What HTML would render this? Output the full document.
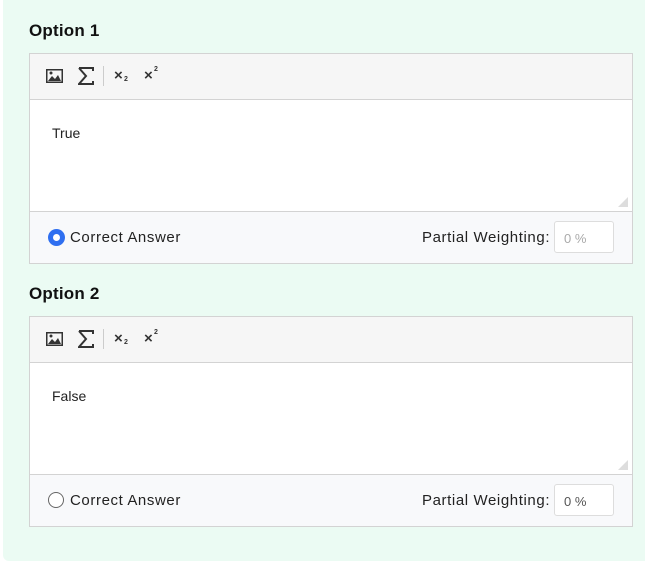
<!DOCTYPE html>
<html><head><style>
body{margin:0;width:645px;height:562px;background:#fff;font-family:"Liberation Sans",sans-serif;position:relative;overflow:hidden}
.panel{position:absolute;left:3px;top:-6px;width:648px;height:567px;background:#ebfbf3;border-radius:6px}
h3{position:absolute;left:29px;margin:0;font-size:17px;font-weight:bold;color:#111;letter-spacing:0.2px}
.box{position:absolute;left:29px;width:602px;height:209px;border:1px solid #d3d3d3;background:#fff}
.tb{height:45px;background:#f6f6f6;border-bottom:1px solid #d3d3d3;position:relative}
.ta{height:111px;position:relative;border-bottom:1px solid #d3d3d3}
.ta span{position:absolute;left:22px;top:25px;font-size:14px;color:#222}
.grip{position:absolute;right:4px;bottom:4px;width:0;height:0;border-left:10px solid transparent;border-bottom:10px solid #ddd}
.ft{height:51px;background:#f8f9fb;position:relative;font-size:15px;color:#222;letter-spacing:0.6px}
.radio{position:absolute;left:18px;top:17px;width:14px;height:14px;border-radius:50%;border:1.5px solid #666;background:#fff}
.radio.on{border:none;width:17px;height:17px;background:#2f6ff0;top:17px}
.radio.on:after{content:"";position:absolute;left:5px;top:5px;width:7px;height:7px;border-radius:50%;background:#fff}
.ca{position:absolute;left:40px;top:17px}
.pw{position:absolute;left:392px;top:17px}
.inp{position:absolute;left:524px;top:9px;width:60px;height:32px;border:1px solid #ddd;border-radius:3px;background:#fff;font-size:13px;color:#999;box-sizing:border-box;padding:9px 0 0 9px;letter-spacing:0}
.x{position:absolute;top:13px;font-size:15px;color:#333;font-weight:bold}
.x small{font-size:7px;position:absolute;left:10px}
</style></head><body>
<div class="panel"></div>

<h3 style="top:21px">Option 1</h3>
<div class="box" style="top:53px">
 <div class="tb">
  <svg style="position:absolute;left:16px;top:15px" width="17" height="14" viewBox="0 0 17 14"><rect x="0.75" y="0.75" width="15.5" height="12.5" fill="none" stroke="#333" stroke-width="1.5"/><path d="M2 12 L6 7 L9 10 L12 6 L15 12 Z" fill="#333"/><circle cx="5" cy="4" r="1.5" fill="#333"/></svg>
  <svg style="position:absolute;left:48px;top:13px" width="16" height="18" viewBox="0 0 16 18"><path d="M1 1 H15 V4 M1 1 L8 9 L1 17 H15 V14" fill="none" stroke="#333" stroke-width="2"/></svg>
  <div style="position:absolute;left:73px;top:12px;width:1px;height:20px;background:#ccc"></div>
  <span class="x" style="left:84px">×<small style="top:9px">2</small></span>
  <span class="x" style="left:114px">×<small style="top:-1px">2</small></span>
 </div>
 <div class="ta"><span>True</span><div class="grip"></div></div>
 <div class="ft"><div class="radio on"></div><span class="ca">Correct Answer</span><span class="pw">Partial Weighting:</span><div class="inp" style="color:#aaa">0 %</div></div>
</div>

<h3 style="top:284px">Option 2</h3>
<div class="box" style="top:316px">
 <div class="tb">
  <svg style="position:absolute;left:16px;top:15px" width="17" height="14" viewBox="0 0 17 14"><rect x="0.75" y="0.75" width="15.5" height="12.5" fill="none" stroke="#333" stroke-width="1.5"/><path d="M2 12 L6 7 L9 10 L12 6 L15 12 Z" fill="#333"/><circle cx="5" cy="4" r="1.5" fill="#333"/></svg>
  <svg style="position:absolute;left:48px;top:13px" width="16" height="18" viewBox="0 0 16 18"><path d="M1 1 H15 V4 M1 1 L8 9 L1 17 H15 V14" fill="none" stroke="#333" stroke-width="2"/></svg>
  <div style="position:absolute;left:73px;top:12px;width:1px;height:20px;background:#ccc"></div>
  <span class="x" style="left:84px">×<small style="top:9px">2</small></span>
  <span class="x" style="left:114px">×<small style="top:-1px">2</small></span>
 </div>
 <div class="ta"><span>False</span><div class="grip"></div></div>
 <div class="ft"><div class="radio"></div><span class="ca">Correct Answer</span><span class="pw">Partial Weighting:</span><div class="inp" style="color:#555">0 %</div></div>
</div>
</body></html>
